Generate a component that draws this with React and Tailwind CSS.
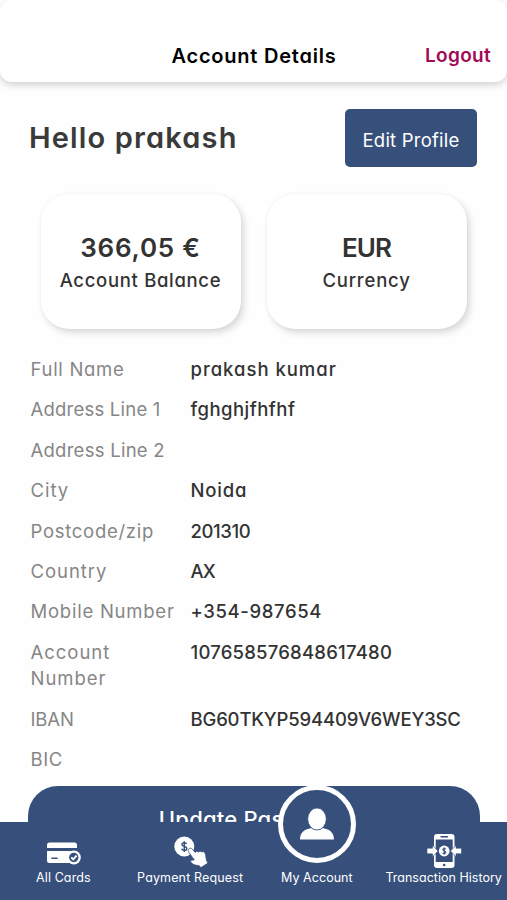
const details = [
  { label: "Full Name", labelClass: "tracking-[0.7px]", value: "prakash kumar", valueClass: "tracking-[0.98px]" },
  { label: "Address Line 1", labelClass: "tracking-[0.22px]", value: "fghghjfhfhf", valueClass: "tracking-[0.48px]" },
  { label: "Address Line 2", labelClass: "tracking-[0.26px]", value: "", valueClass: "" },
  { label: "City", labelClass: "tracking-[0.95px]", value: "Noida", valueClass: "tracking-[0.8px]" },
  { label: "Postcode/zip", labelClass: "tracking-[0.72px]", value: "201310", valueClass: "tracking-[-0.4px]" },
  { label: "Country", labelClass: "tracking-[0.95px]", value: "AX", valueClass: "tracking-[-0.9px]" },
  { label: "Mobile Number", labelClass: "tracking-[0.76px]", value: "+354-987654", valueClass: "tracking-[0.62px]" },
  { label: "Account Number", labelClass: "tracking-[0.98px] pr-8", value: "107658576848617480", valueClass: "tracking-[0.22px]" },
  { label: "IBAN", labelClass: "tracking-[-0.1px]", value: "BG60TKYP594409V6WEY3SC", valueClass: "tracking-[-0.17px]" },
  { label: "BIC", labelClass: "tracking-[0.6px]", value: "", valueClass: "" },
];

function CardsIcon() {
  return (
    <svg viewBox="0 0 36 26" className="h-[26px] w-9" fill="#fff">
      <path d="M4.500 1.500h25a2.500 2.500 0 0 1 2.500 2.500v3H2V4a2.500 2.500 0 0 1 2.500-2.500z" />
      <path d="M2 10h30v9.500a2.500 2.500 0 0 1-2.500 2.500h-25A2.500 2.500 0 0 1 2 19.500z" />
      <path d="M7 17.300h5" stroke="#36507b" strokeWidth="1.600" strokeLinecap="round" />
      <circle cx="28.800" cy="16.500" r="7" />
      <circle cx="28.800" cy="16.500" r="4.700" fill="#36507b" />
      <path d="M26.300 16.400l1.900 2 3.400-3.700" fill="none" stroke="#fff" strokeWidth="1.900" />
    </svg>
  );
}

function PaymentIcon() {
  return (
    <svg viewBox="0 0 36 34" className="h-[34px] w-9" fill="#fff">
      <circle cx="12.300" cy="11.500" r="10" />
      <path
        d="M14.600 9c-.4-1-1.200-1.300-2.300-1.300-1.400 0-2.400.6-2.400 1.800 0 2.600 4.900 1.300 4.900 3.900 0 1.300-1.100 1.900-2.500 1.900s-2.400-.6-2.700-1.600M12.300 6.200v10.800"
        fill="none"
        stroke="#36507b"
        strokeWidth="1.400"
      />
      <path
        d="M16.800 13.800c1-.9 2.500-.8 3.400.3l3.100 3.400 1.300-1.300 1.900.8 1.500-1 1.700.9 1.600-.4c1.500.8 2.100 2.200 2.400 3.900l.6 4.400 1.600 3.300-6.900 4.500-2-2.100c-3 .1-6-.9-8-3-.8-1-.1-2.300 1-2.400l2.300-.1-5.500-7.700c-.8-1.200-.9-2.600 0-3.500z"
        stroke="#36507b"
        strokeWidth=".8"
      />
    </svg>
  );
}

function PersonIcon() {
  return (
    <svg viewBox="0 0 36 34" className="h-[34px] w-9" fill="#fff">
      <path d="M1 32.500c.2-6.200 3.200-9 8-10.400l3.200-1.100c2.900 2.900 8.700 2.900 11.600 0l3.200 1.100c4.800 1.400 7.800 4.200 8 10.400z" />
      <ellipse cx="18" cy="12" rx="9.300" ry="11" stroke="#36507b" strokeWidth=".8" />
    </svg>
  );
}

function HistoryIcon() {
  return (
    <svg viewBox="0 0 36 36" className="h-9 w-9">
      <rect x="8" y="1" width="20.500" height="34" rx="3" fill="#fff" />
      <rect x="9.700" y="6.500" width="17" height="22.500" fill="#36507b" />
      <path d="M15 3.800h6.500" stroke="#36507b" strokeWidth="1.400" strokeLinecap="round" />
      <circle cx="18.200" cy="32" r="1.300" fill="#36507b" />
      <g fill="#fff" stroke="#36507b" strokeWidth=".6">
        <path d="M1 15.200h5.500v-3l5.500 5.800-5.500 5.800v-3H1z" />
        <path d="M35.500 15.200H30v-3L24.500 18l5.500 5.800v-3h5.500z" />
      </g>
      <circle cx="18.200" cy="18" r="5.400" fill="#fff" />
      <path d="M19.800 16.100c-1-1-3-.8-3 .5 0 1.700 3 1 3 2.700 0 1.400-2.200 1.600-3.200.5M18.200 14.300v7.400" fill="none" stroke="#36507b" strokeWidth="1.100" />
    </svg>
  );
}

function StatCard({ value, label, valueClass, labelClass }) {
  return (
    <div className="flex h-[135px] w-[200px] flex-col items-center rounded-[28px] bg-white pt-[37px] text-[#333] shadow-[3px_4px_7px_rgba(0,0,0,0.14),0_0_4px_rgba(0,0,0,0.04)]">
      <div className={`text-[26px] leading-[34px] font-semibold whitespace-nowrap ${valueClass}`}>{value}</div>
      <div className={`text-[18.5px] leading-[31px] font-medium whitespace-nowrap ${labelClass}`}>{label}</div>
    </div>
  );
}

function NavItem({ icon, label, labelClass }) {
  return (
    <div className="flex flex-1 flex-col items-center justify-end pb-[13px] text-white">
      {icon}
      <span className={`text-[12.5px] leading-[18px] whitespace-nowrap ${labelClass}`}>{label}</span>
    </div>
  );
}

export default function App() {
  return (
    <div className="flex h-[900px] w-[507px] flex-col overflow-hidden bg-[#fefefe] font-[Inter,'Noto_Sans',sans-serif] [font-feature-settings:'cv11']">
      <header className="grid h-[82px] shrink-0 grid-cols-[1fr_auto_1fr] items-start rounded-xl bg-white pt-[42px] shadow-[0_3px_7px_rgba(0,0,0,0.18)]">
        <h1 className="col-start-2 pl-px text-xl leading-7 font-semibold tracking-[0.78px] text-black">Account Details</h1>
        <a className="mr-4 justify-self-end text-[19px] leading-7 font-semibold tracking-[0.3px] text-[#a30a55]">Logout</a>
      </header>

      <main className="flex min-h-0 flex-1 flex-col overflow-hidden">
        <div className="flex shrink-0 items-start justify-between pt-[27px] pr-[30px] pl-[29px]">
          <h2 className="pt-[9px] text-[29px] leading-10 font-semibold tracking-[1.15px] text-[#3a3a3a]">Hello prakash</h2>
          <button className="h-[58px] w-[132px] rounded-[5px] bg-[#36507b] pt-[6px] text-[18.5px] tracking-[0.22px] text-white">Edit Profile</button>
        </div>

        <div className="mt-[27px] flex shrink-0 justify-center gap-[26px]">
          <StatCard value="366,05 €" label="Account Balance" valueClass="tracking-[0.8px]" labelClass="tracking-[0.68px]" />
          <StatCard value="EUR" label="Currency" valueClass="tracking-[-0.9px]" labelClass="tracking-[0.8px]" />
        </div>

        <dl className="mt-[27px] flex shrink-0 flex-col gap-[14px] pl-[30.5px] text-[18.5px] leading-[26.4px]">
          {details.map((row) => (
            <div key={row.label} className="flex">
              <dt className={`w-40 shrink-0 text-[#868686] ${row.labelClass}`}>{row.label}</dt>
              <dd className={`font-medium whitespace-nowrap text-[#333] ${row.valueClass}`}>{row.value}</dd>
            </div>
          ))}
        </dl>

        <button className="mt-[14px] ml-7 h-[66px] w-[452px] shrink-0 rounded-[30px] bg-[#36507b] text-[22px] font-medium tracking-[0.2px] text-white">
          Update Password
        </button>
      </main>

      <nav className="relative flex h-[78px] shrink-0 bg-[#36507b]">
        <NavItem icon={<div className="mb-[2px]"><CardsIcon /></div>} label="All Cards" labelClass="tracking-[0.1px]" />
        <NavItem icon={<PaymentIcon />} label="Payment Request" labelClass="tracking-[0.14px]" />
        <NavItem
          icon={
            <div className="absolute -top-[37px] flex h-[78px] w-[78px] items-center justify-center rounded-full border-[5px] border-white bg-[#36507b]">
              <PersonIcon />
            </div>
          }
          label="My Account"
          labelClass="tracking-[0.04px]"
        />
        <NavItem icon={<HistoryIcon />} label="Transaction History" labelClass="tracking-[0.02px]" />
      </nav>
    </div>
  );
}
